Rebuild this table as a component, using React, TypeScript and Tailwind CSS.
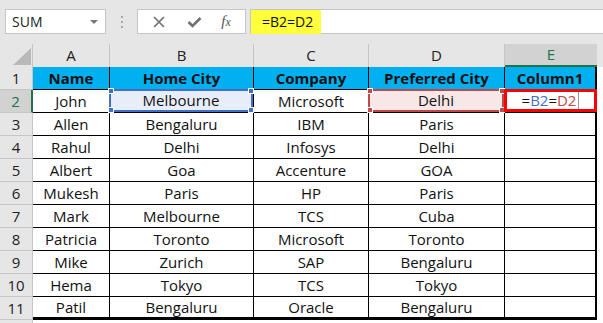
import React from "react";

const cols = [
  { key: "A", w: "w-[77px]" },
  { key: "B", w: "w-[144px]" },
  { key: "C", w: "w-[115px]" },
  { key: "D", w: "w-[136px]" },
  { key: "E", w: "w-[92px]" },
];

const rows: string[][] = [
  ["John", "Melbourne", "Microsoft", "Delhi", ""],
  ["Allen", "Bengaluru", "IBM", "Paris", ""],
  ["Rahul", "Delhi", "Infosys", "Delhi", ""],
  ["Albert", "Goa", "Accenture", "GOA", ""],
  ["Mukesh", "Paris", "HP", "Paris", ""],
  ["Mark", "Melbourne", "TCS", "Cuba", ""],
  ["Patricia", "Toronto", "Microsoft", "Toronto", ""],
  ["Mike", "Zurich", "SAP", "Bengaluru", ""],
  ["Hema", "Tokyo", "TCS", "Tokyo", ""],
  ["Patil", "Bengaluru", "Oracle", "Bengaluru", ""],
];

const headers = ["Name", "Home City", "Company", "Preferred City", "Column1"];

function Handles({ color }: { color: string }) {
  const base = `absolute w-[6px] h-[6px] border border-white ${color}`;
  return (
    <>
      <span className={`${base} -left-[3px] -top-[3px]`} />
      <span className={`${base} -right-[3px] -top-[3px]`} />
      <span className={`${base} -left-[3px] -bottom-[3px]`} />
      <span className={`${base} -right-[3px] -bottom-[3px]`} />
    </>
  );
}

function FormulaBar() {
  return (
    <div className="h-[44px] flex items-start pt-[9px] pl-[5px]">
      <div className="w-[101px] h-[25px] bg-white border border-[#c6c6c6] flex items-center justify-between pl-[6px] pr-[7px]">
        <span className="text-[14px] text-[#222]">SUM</span>
        <span className="w-0 h-0 border-l-[4px] border-r-[4px] border-t-[4px] border-l-transparent border-r-transparent border-t-[#777]" />
      </div>
      <div className="w-[31px] h-[25px] flex flex-col items-center justify-center gap-[3px]">
        <span className="w-[2px] h-[2px] bg-[#a8a8a8]" />
        <span className="w-[2px] h-[2px] bg-[#a8a8a8]" />
        <span className="w-[2px] h-[2px] bg-[#a8a8a8]" />
      </div>
      <div className="w-[109px] h-[25px] bg-white border border-[#c6c6c6] flex items-center">
        <div className="w-[40px] flex justify-center pl-[2px]">
          <svg width="12" height="12" viewBox="0 0 12 12">
            <path d="M1 1 L11 11 M11 1 L1 11" stroke="#707070" strokeWidth="1.7" />
          </svg>
        </div>
        <div className="w-[33px] flex justify-center">
          <svg width="15" height="12" viewBox="0 0 15 12">
            <path d="M1.5 6 L5.5 10 L13.5 2" stroke="#707070" strokeWidth="2.6" fill="none" />
          </svg>
        </div>
        <div className="flex-1 flex justify-center pr-[4px]">
          <span className="text-[15px] italic text-[#555] font-['Liberation_Serif',serif] leading-none">
            f<span className="text-[12px]">x</span>
          </span>
        </div>
      </div>
      <div className="ml-[4px] flex-1 h-[25px] bg-white border-y border-l border-[#c6c6c6] flex items-center">
        <span className="h-[24px] w-[70px] bg-[#ffff3c] flex items-center pl-[11px] text-[14px] text-[#111]">
          =B2=D2
        </span>
      </div>
    </div>
  );
}

function ColumnHeaders() {
  return (
    <div className="flex h-[23px]">
      <div className="w-[33px] h-full border-r border-[#c6c6c6] flex items-end justify-end pr-[1px] pb-[2px]">
        <svg width="18" height="17" viewBox="0 0 18 17">
          <path d="M18 0 L18 17 L0 17 Z" fill="#b9b9b9" />
        </svg>
      </div>
      {cols.map((c) =>
        c.key === "E" ? (
          <div
            key={c.key}
            className={`${c.w} h-full bg-[#d2d2d2] border-b-2 border-[#217346] flex items-center justify-center text-[15px] text-[#217346]`}
          >
            {c.key}
          </div>
        ) : (
          <div
            key={c.key}
            className={`${c.w} h-full border-r border-[#c6c6c6] flex items-center justify-center text-[15px] text-[#222]`}
          >
            {c.key}
          </div>
        )
      )}
    </div>
  );
}

function RowHeader({ n }: { n: number }) {
  const sel = n === 2;
  return (
    <div
      className={`w-[33px] h-full flex items-center justify-center text-[15px] border-b ${
        sel
          ? "bg-[#d2d2d2] text-[#217346] border-r-2 border-r-[#217346] border-b-[#c6c6c6]"
          : "text-[#222] border-r border-[#c6c6c6]"
      }`}
    >
      {n}
    </div>
  );
}

export default function App() {
  return (
    <div className="w-[603px] h-[323px] bg-[#e6e6e6] overflow-hidden font-['Open_Sans',sans-serif]">
      <FormulaBar />
      <ColumnHeaders />
      {/* header row of the table */}
      <div className="flex h-[23px]">
        <RowHeader n={1} />
        {headers.map((h, i) => (
          <div
            key={h}
            className={`${cols[i].w} h-full bg-[#00b0f0] border-r border-b border-black ${
              i === 4 ? "border-r-2" : ""
            } flex items-center justify-center text-[15px] font-bold text-[#111]`}
          >
            {h}
          </div>
        ))}
        <div className="flex-1 bg-white" />
      </div>
      {rows.map((r, ri) => {
        const n = ri + 2;
        const last = ri === rows.length - 1;
        return (
          <div key={n} className="flex h-[23px]">
            <RowHeader n={n} />
            {r.map((v, ci) => {
              const edge = ci === 4 ? "border-r-2" : "border-r";
              const bottom = last ? "border-b-[3px]" : "border-b";
              if (n === 2 && ci === 1) {
                return (
                  <div key={ci} className={`${cols[ci].w} h-full relative bg-white ${edge} ${bottom} border-black`}>
                    <div className="absolute -left-[1px] -top-[1px] right-0 bottom-0 bg-[#e8eef9] border-2 border-[#3f6fc7] flex items-center justify-center text-[15px] text-[#111]">
                      {v}
                      <Handles color="bg-[#3f6fc7]" />
                    </div>
                  </div>
                );
              }
              if (n === 2 && ci === 3) {
                return (
                  <div key={ci} className={`${cols[ci].w} h-full relative bg-white ${edge} ${bottom} border-black`}>
                    <div className="absolute -left-[1px] -top-[1px] right-0 bottom-0 bg-[#f7e7e7] border-2 border-[#c0474a] flex items-center justify-center text-[15px] text-[#111]">
                      {v}
                      <Handles color="bg-[#c0474a]" />
                    </div>
                  </div>
                );
              }
              if (n === 2 && ci === 4) {
                return (
                  <div key={ci} className={`${cols[ci].w} h-full relative bg-white ${edge} ${bottom} border-black`}>
                    <div className="absolute -left-[1px] -top-[1px] -right-[2px] bottom-0 border-[3px] border-[#ff0000] flex items-center justify-center text-[15px]">
                      <span className="text-[#111]">=</span>
                      <span className="text-[#3f6fc7]">B2</span>
                      <span className="text-[#111]">=</span>
                      <span className="text-[#c0474a]">D2</span>
                      <span className="ml-[2px] w-[1px] h-[17px] bg-[#999]" />
                    </div>
                  </div>
                );
              }
              return (
                <div
                  key={ci}
                  className={`${cols[ci].w} h-full bg-white ${edge} ${bottom} border-black flex items-center justify-center text-[15px] text-[#111]`}
                >
                  {v}
                </div>
              );
            })}
            <div className="flex-1 bg-white" />
          </div>
        );
      })}
      <div className="flex h-[3px]">
        <div className="w-[33px] h-full bg-[#e6e6e6] border-r border-[#c6c6c6]" />
        <div className="flex-1 bg-white" />
      </div>
    </div>
  );
}
